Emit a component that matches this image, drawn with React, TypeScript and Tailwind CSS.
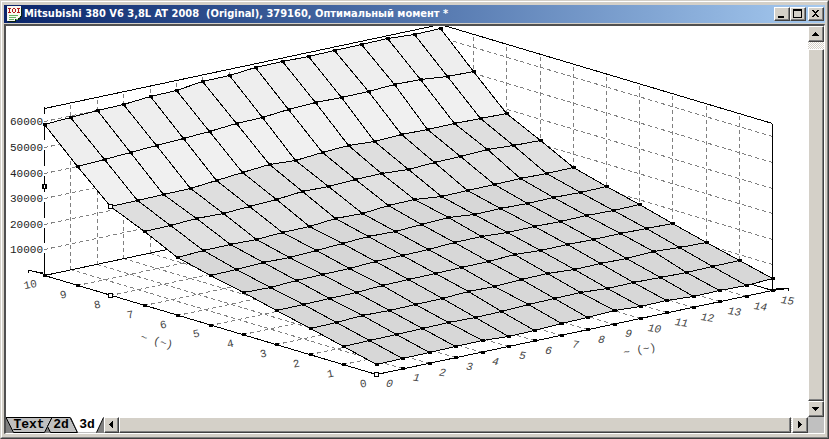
import type { ReactNode } from "react";
import clsx from "clsx";

type Point = [number, number];

// screen heights of the surface nodes, one row per left-axis value (0..10)
const SURFACE = [
  [364, 358, 352, 346, 340, 336, 330, 323, 317, 310, 306, 300, 296, 290, 285, 278],
  [346, 340, 334, 328, 322, 317, 311, 304, 298, 292, 288, 282, 277, 272, 266, 260],
  [328, 322, 315, 310, 304, 298, 291, 286, 279, 273, 269, 263, 258, 251, 247, 242],
  [310, 304, 298, 292, 285, 279, 273, 267, 261, 254, 250, 244, 239, 233, 228, 223],
  [292, 287, 280, 274, 268, 261, 255, 249, 242, 236, 232, 226, 221, 215, 210, 204],
  [275, 269, 262, 257, 250, 243, 236, 231, 224, 217, 214, 208, 203, 197, 192, 186],
  [257, 250, 244, 239, 232, 226, 218, 213, 205, 199, 196, 190, 184, 178, 173, 167],
  [231, 225, 218, 213, 206, 199, 191, 186, 179, 173, 169, 162, 156, 149, 145, 140],
  [206, 200, 194, 188, 180, 172, 164, 160, 152, 145, 141, 134, 129, 123, 118, 113],
  [166, 159, 152, 145, 138, 131, 123, 117, 109, 102, 97, 91, 84, 79, 76, 71],
  [124, 117, 110, 104, 96, 90, 81, 75, 67, 61, 56, 50, 44, 38, 34, 28],
];

const SHADES = ["#d7d7d7", "#d7d7d7", "#d7d7d7", "#d7d7d7", "#d6d6d6", "#d7d7d7", "#e0e0e0", "#dedede", "#f0f0f0", "#eeeeee"];

const COLS = Array.from({ length: 16 }, (_, i) => i);
const ROWS = Array.from({ length: 11 }, (_, j) => j);
const TICKS = [10000, 20000, 30000, 40000, 50000, 60000];
const HEIGHT = 167;

const floor = (i: number, j: number): Point => [
  Math.round(376 + 26.4 * i - 33.2 * j),
  Math.round(374 - 5.6 * i - 9.9 * j),
];
const node = (i: number, j: number): Point => [floor(i, j)[0], SURFACE[j][i]];
const lift = ([x, y]: Point, h: number): Point => [x, y - h];
const tickHeight = (v: number) => Math.round((v / 10000) * 25.6);

function Line({ a, b, dashed }: { a: Point; b: Point; dashed?: boolean }) {
  return (
    <line
      x1={a[0] + 0.5}
      y1={a[1] + 0.5}
      x2={b[0] + 0.5}
      y2={b[1] + 0.5}
      stroke={dashed ? "#808080" : "#000"}
      strokeDasharray={dashed ? "4 3" : undefined}
    />
  );
}

function Dot({ at, hollow }: { at: Point; hollow?: boolean }) {
  return hollow ? (
    <rect x={at[0] - 1.5} y={at[1] - 1.5} width="4" height="4" fill="#fff" stroke="#000" />
  ) : (
    <rect x={at[0] - 1} y={at[1] - 1} width="4" height="3" />
  );
}

function Chart() {
  const left = floor(0, 10);
  const back = floor(15, 10);
  const right = floor(15, 0);
  const front = floor(0, 0);

  return (
    <svg
      viewBox="6 26 802 391"
      preserveAspectRatio="xMinYMin meet"
      className="block h-full w-full font-['Liberation_Mono',monospace] text-[11px]"
      shapeRendering="crispEdges"
      role="img"
      aria-label="3d"
    >
      {/* walls and floor */}
      {COLS.slice(1, 15).map((i) => (
        <g key={i}>
          <Line dashed a={floor(i, 10)} b={lift(floor(i, 10), HEIGHT)} />
          <Line dashed a={floor(i, 0)} b={floor(i, 10)} />
        </g>
      ))}
      {ROWS.slice(1, 10).map((j) => (
        <g key={j}>
          <Line dashed a={floor(15, j)} b={lift(floor(15, j), HEIGHT)} />
          <Line dashed a={floor(0, j)} b={floor(15, j)} />
        </g>
      ))}
      {TICKS.map((v) => (
        <g key={v}>
          <Line dashed a={lift(left, tickHeight(v))} b={lift(back, tickHeight(v))} />
          <Line dashed a={lift(right, tickHeight(v))} b={lift(back, tickHeight(v))} />
        </g>
      ))}
      <Line a={lift(left, HEIGHT)} b={lift(back, HEIGHT)} />
      <Line a={lift(back, HEIGHT)} b={lift(right, HEIGHT)} />
      <Line a={lift(right, HEIGHT)} b={right} />
      <Line a={left} b={back} />
      <Line a={back} b={right} />

      {/* surface, from the far rows to the near ones */}
      {ROWS.slice(0, 10)
        .reverse()
        .map((j) =>
          COLS.slice(0, 15).map((i) => (
            <polygon
              key={`${i}-${j}`}
              points={[node(i, j), node(i + 1, j), node(i + 1, j + 1), node(i, j + 1)]
                .map(([x, y]) => `${x + 0.5},${y + 0.5}`)
                .join(" ")}
              fill={SHADES[j]}
              stroke="#000"
            />
          )),
        )}

      {/* axes */}
      <Line a={left} b={front} />
      <Line a={front} b={right} />
      <path
        d="M44.5 107v7M44.5 124v16M44.5 150v16M44.5 176v16M44.5 202v16M44.5 228v15M44.5 253v22"
        stroke="#000"
      />
      <path d="M44 274.5L36 271.5L28.5 270.5V273M36 272.5H43M772 289.5L780 288.5L788 288.5V291M772 290.5L788 288.5" fill="none" stroke="#000" />

      {ROWS.map((j) => COLS.map((i) => <Dot key={`${i}-${j}`} at={node(i, j)} hollow={i === 0 && j === 8} />))}
      {ROWS.map((j) => (
        <Dot key={j} at={floor(0, j)} hollow={j === 0 || j === 8} />
      ))}
      {COLS.slice(1).map((i) => (
        <Dot key={i} at={floor(i, 0)} />
      ))}
      <path d="M42 184h5v5h-5zM44 182h1v9h-1z" />
      <path d="M44 185h1v3h-1z" fill="#fff" />

      {TICKS.map((v) => (
        <text key={v} x="43" y={279 - tickHeight(v)} textAnchor="end" fill="#222">
          {v}
        </text>
      ))}
      {ROWS.map((j) => {
        const [x, y] = [364 - Math.round(33.3 * j), 387 - Math.round(9.9 * j)];
        return (
          <text key={j} x={x} y={y} textAnchor="middle" fill="#444" transform={`rotate(-12 ${x} ${y})`}>
            {j}
          </text>
        );
      })}
      {COLS.map((i) => {
        const [x, y] = [389 + Math.round(26.5 * i), 387 - Math.round(5.5 * i)];
        return (
          <text key={i} x={x} y={y} textAnchor="middle" fontStyle="italic" fill="#444" transform={`rotate(8 ${x} ${y})`}>
            {i}
          </text>
        );
      })}
      <text x="140" y="340" fill="#444" xmlSpace="preserve" transform="rotate(15 140 340)">
        ~ (~)
      </text>
      <text x="624" y="356" fill="#444" xmlSpace="preserve" transform="rotate(-10 624 356)">
        ~ (~)
      </text>
    </svg>
  );
}

function Bevel({ label, className, children }: { label: string; className?: string; children?: ReactNode }) {
  return (
    <button
      type="button"
      aria-label={label}
      className={clsx(
        "flex shrink-0 items-center justify-center border border-t-white border-l-white border-r-[#404040] border-b-[#404040] bg-[#d4d0c8] shadow-[inset_-1px_-1px_0_#808080]",
        className,
      )}
    >
      {children}
    </button>
  );
}

function Glyph({ d }: { d: string }) {
  return (
    <svg viewBox="0 0 10 10" className="h-[10px] w-[10px]" shapeRendering="crispEdges" aria-hidden="true">
      <path d={d} />
    </svg>
  );
}

function AppIcon() {
  return (
    <svg viewBox="0 0 16 16" className="h-4 w-4 shrink-0" shapeRendering="crispEdges" aria-hidden="true">
      <path d="M2 2h14v9h-1v2h-2v1h-3v2H2z" fill="#0c2410" />
      <path d="M1 0h14v10h-1v2h-2v1H9v2H1z" fill="#f8f8f0" />
      <path d="M2 2h3v1H4v3h1v1H2V6h1V3H2zM7 2h2v1H7zM6 3h1v3H6zM9 3h1v3H9zM7 6h2v1H7zM11 2h3v1h-1v3h1v1h-3V6h1V3h-1z" fill="#b01818" />
      <path d="M3 9h9v1H3zM3 11h7v1H3zM3 13h5v1H3zM13 11h1v1h-1zM10 13h2v1h-2z" fill="#60b060" />
    </svg>
  );
}

function Tabs() {
  return (
    <nav className="relative flex h-4 w-[98px] shrink-0 bg-[#808080] font-['Liberation_Mono',monospace] text-[13px] leading-4 font-bold text-black">
      <svg viewBox="0 0 98 16" className="absolute inset-0 h-full w-full" aria-hidden="true">
        <path d="M0 0.5H46L38.5 15.5H7.5Z" fill="#c0c0c0" stroke="#000" />
        <path d="M46 0.5H64L71.5 15.5H44.5L41.5 9.5Z" fill="#c0c0c0" stroke="#000" />
        <path d="M64 0H98L90.5 15.5H71.5Z" fill="#fff" />
        <path d="M64.5 0.5L71.5 15.5M97.5 0.5L90.5 15.5" stroke="#000" />
      </svg>
      <button type="button" className="relative w-[42px] pl-1">
        <span className="underline">T</span>ext
      </button>
      <button type="button" className="relative w-[26px]">
        2d
      </button>
      <button type="button" className="relative w-[26px]" aria-current="page">
        3d
      </button>
    </nav>
  );
}

const CHECKER =
  "bg-[repeating-conic-gradient(#fff_0_25%,#d4d0c8_0_50%)] bg-[length:2px_2px]";

export default function App() {
  return (
    <div className="h-screen min-h-60 border border-t-[#d4d0c8] border-l-[#d4d0c8] border-r-[#404040] border-b-[#404040]">
      <div className="flex h-full flex-col border border-t-white border-l-white border-r-[#808080] border-b-[#808080] bg-[#d4d0c8] px-[2px] py-[3px]">
        <header className="mb-px flex h-[18px] shrink-0 items-center bg-linear-to-r from-[#0a246a] to-[#a6caf0] pr-px pl-[2px]">
          <AppIcon />
          <h1 className="ml-[2px] flex-1 overflow-hidden font-['DejaVu_Sans_Condensed','DejaVu_Sans',sans-serif] text-[11px] leading-4 font-bold whitespace-pre text-white">
            {"Mitsubishi 380 V6 3,8L AT 2008  (Original), 379160, Оптимальный момент *"}
          </h1>
          <Bevel label="Minimize" className="h-[14px] w-4">
            <Glyph d="M1 7h6v2H1z" />
          </Bevel>
          <Bevel label="Maximize" className="h-[14px] w-4">
            <Glyph d="M0 0h9v9H0zM1 2v6h7V2z" />
          </Bevel>
          <Bevel label="Close" className="ml-[2px] h-[14px] w-4">
            <Glyph d="M1 1h2v1h1v1h1V2h1V1h2v1H7v1H6v1H5v1h1v1h1v1h1v1H6V7H5V6H4v1H3v1H1V7h1V6h1V5h1V4H3V3H2V2H1z" />
          </Bevel>
        </header>

        <main className="flex min-h-0 flex-1 flex-col border-t-2 border-r border-b border-l-2 border-t-[#505050] border-r-white border-b-white border-l-[#505050] bg-white">
          <div className="flex min-h-0 flex-1">
            <div className="min-w-0 flex-1">
              <Chart />
            </div>
            <div className={clsx("flex w-4 flex-col", CHECKER)}>
              <Bevel label="Scroll up" className="h-4 w-4">
                <Glyph d="M4 3h1v1h1v1h1v1h1v1H1V6h1V5h1V4h1z" />
              </Bevel>
              <Bevel label="Vertical position" className="mt-[7px] flex-1" />
              <Bevel label="Scroll down" className="h-4 w-4">
                <Glyph d="M1 3h7v1H7v1H6v1H5v1H4V6H3V5H2V4H1z" />
              </Bevel>
            </div>
          </div>
          <div className={clsx("flex h-4 shrink-0", CHECKER)}>
            <Tabs />
            <Bevel label="Scroll left" className="h-4 w-[15px]">
              <Glyph d="M6 1v7H5V7H4V6H3V5H2V4h1V3h1V2h1V1z" />
            </Bevel>
            <Bevel label="Horizontal position" className="mr-px flex-1" />
            <Bevel label="Scroll right" className="h-4 w-4">
              <Glyph d="M3 1v7h1V7h1V6h1V5h1V4H6V3H5V2H4V1z" />
            </Bevel>
            <div className="w-4 bg-[#c0c0c0]" />
          </div>
        </main>
      </div>
    </div>
  );
}
